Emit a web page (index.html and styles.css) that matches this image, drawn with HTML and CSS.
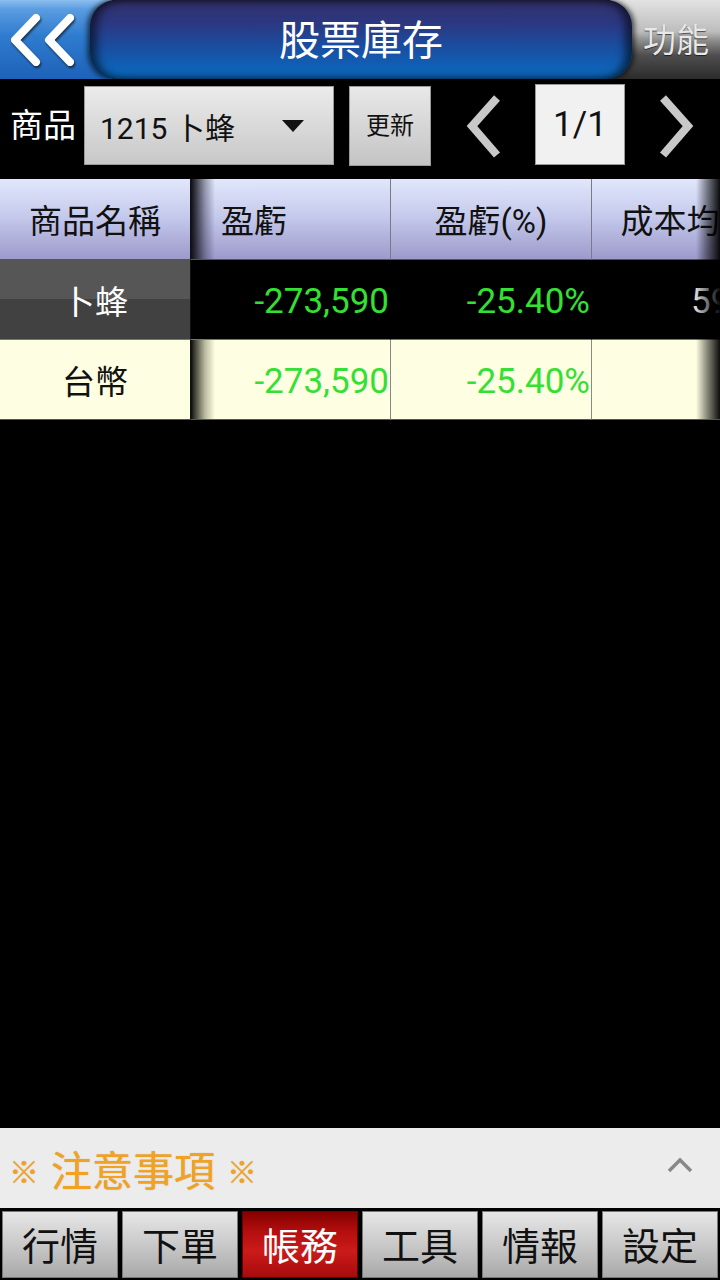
FILE: index.html
```html
<!DOCTYPE html>
<html lang="zh-Hant">
<head>
<meta charset="utf-8">
<title>股票庫存</title>
<link rel="stylesheet" href="styles.css">
</head>
<body>
<div class="app">
  <header class="topbar">
    <div class="back">
      <svg class="back-icon" width="90" height="79" viewBox="0 0 90 79">
        <polyline points="36,18 15,40 36,62" />
        <polyline points="70,18 49,40 70,62" />
      </svg>
    </div>
    <div class="title">股票庫存</div>
    <div class="func">功能</div>
  </header>

  <div class="toolbar">
    <span class="label">商品</span>
    <div class="select"><span class="select-text">1215 卜蜂</span><span class="caret"></span></div>
    <div class="refresh">更新</div>
    <svg class="chev chev-left" width="40" height="86" viewBox="0 0 40 86">
      <polyline points="33,12 8,40 33,69" />
    </svg>
    <div class="page">1/1</div>
    <svg class="chev chev-right" width="40" height="86" viewBox="0 0 40 86">
      <polyline points="7,12 32,40 7,69" />
    </svg>
  </div>

  <div class="table-wrap">
    <div class="grid">
      <div class="cell th c1">商品名稱</div>
      <div class="cell th c2 shade">盈虧</div>
      <div class="cell th c3">盈虧(%)</div>
      <div class="cell th c4">成本均價</div>

      <div class="cell r1 c1 name-dark">卜蜂</div>
      <div class="cell r1 c2 num">-273,590</div>
      <div class="cell r1 c3 num">-25.40%</div>
      <div class="cell r1 c4 num plain">59.52</div>

      <div class="cell r2 c1">台幣</div>
      <div class="cell r2 c2 num shade">-273,590</div>
      <div class="cell r2 c3 num">-25.40%</div>
      <div class="cell r2 c4"></div>
    </div>
    <div class="edge-shadow"></div>
  </div>

  <div class="spacer"></div>

  <div class="notice">
    <span class="notice-text"><span class="mark">※</span>注意事項<span class="mark">※</span></span>
    <svg class="up" width="30" height="20" viewBox="0 0 30 20">
      <polyline points="3,16 14,5 25,16" />
    </svg>
  </div>

  <nav class="tabs">
    <div class="tab">行情</div>
    <div class="tab">下單</div>
    <div class="tab active">帳務</div>
    <div class="tab">工具</div>
    <div class="tab">情報</div>
    <div class="tab">設定</div>
  </nav>
</div>
</body>
</html>
```

FILE: styles.css
```css
* { box-sizing: border-box; }

html, body {
  margin: 0;
  padding: 0;
  background: #000;
}

body {
  font-family: Roboto, "Noto Sans CJK TC", "Noto Sans", sans-serif;
}

.app {
  width: 720px;
  height: 1280px;
  display: flex;
  flex-direction: column;
  background: #000;
  overflow: hidden;
}

/* ---------- top bar ---------- */
.topbar {
  height: 79px;
  display: flex;
  flex: none;
}

.back {
  width: 112px;
  flex: none;
  background: linear-gradient(#8cbff0 0%, #5a9ce0 12%, #2f7ccf 45%, #1d62b8 100%);
}

.back-icon {
  display: block;
  filter: drop-shadow(1px 2px 1px rgba(0, 0, 0, 0.6));
}

.back-icon polyline {
  fill: none;
  stroke: #fff;
  stroke-width: 8;
  stroke-linecap: round;
  stroke-linejoin: round;
}

.title {
  position: relative;
  z-index: 2;
  flex: 1;
  margin: 0 -22px;
  border-radius: 26px;
  background: linear-gradient(#33306a 0%, #2b3882 30%, #194ea0 60%, #0a6cc4 100%);
  box-shadow: inset 7px 0 9px rgba(0, 0, 0, 0.55), inset -7px 0 9px rgba(0, 0, 0, 0.55),
              -3px 0 5px rgba(0, 0, 0, 0.55), 3px 0 5px rgba(0, 0, 0, 0.55);
  color: #fff;
  font-size: 41px;
  line-height: 82px;
  text-align: center;
}

.func {
  width: 110px;
  flex: none;
  padding-left: 22px;
  background: linear-gradient(#e2e2e2 0%, #bdbdbd 40%, #8a8a8a 52%, #4e4e4e 70%, #2c2c2c 100%);
  color: #e8e8e8;
  font-size: 33px;
  line-height: 82px;
  text-align: center;
  text-shadow: 0 1px 1px rgba(0, 0, 0, 0.6);
}

/* ---------- toolbar ---------- */
.toolbar {
  height: 100px;
  flex: none;
  display: flex;
  align-items: flex-start;
  padding-top: 7px;
}

.label {
  width: 84px;
  padding-left: 10px;
  color: #fff;
  font-size: 33px;
  line-height: 79px;
}

.select {
  width: 250px;
  height: 79px;
  display: flex;
  align-items: center;
  justify-content: space-between;
  padding: 0 29px 0 15px;
  background: linear-gradient(#ebebeb, #c8c8c8);
  border: 1px solid #9a9a9a;
  color: #111;
}

.select-text {
  font-size: 30px;
}

.caret {
  width: 0;
  height: 0;
  border-left: 11px solid transparent;
  border-right: 11px solid transparent;
  border-top: 12px solid #111;
}

.refresh {
  width: 82px;
  height: 80px;
  margin-left: 15px;
  background: linear-gradient(#e8e8e8, #c4c4c4);
  border: 1px solid #9a9a9a;
  color: #111;
  font-size: 24px;
  line-height: 78px;
  text-align: center;
}

.chev {
  flex: none;
  display: block;
}

.chev polyline,
.up polyline {
  fill: none;
}

.chev polyline {
  stroke: #c8c8c8;
  stroke-width: 8;
}

.chev-left { margin-left: 33px; }

.page {
  width: 90px;
  height: 81px;
  margin-top: -2px;
  margin-left: 31px;
  background: #f1f1f1;
  border: 1px solid #9a9a9a;
  color: #111;
  font-size: 35px;
  line-height: 79px;
  text-align: center;
}

.chev-right { margin-left: 31px; }

/* ---------- table ---------- */
.table-wrap {
  position: relative;
  flex: none;
  overflow: hidden;
  width: 720px;
}

.grid {
  display: grid;
  grid-template-columns: 191px 200px 201px 190px;
  grid-template-rows: 81px 80px 80px;
  width: 782px;
}

.cell {
  border-right: 1px solid #7a7a80;
  border-bottom: 1px solid #555;
  display: flex;
  align-items: center;
  white-space: nowrap;
  overflow: hidden;
}

.th {
  background: linear-gradient(#e1e7fb 0%, #c6cbed 45%, #9d9acb 100%);
  color: #111;
  font-size: 33px;
  justify-content: center;
}

.th.c1 { border-right-color: #111; }
.th.c2 { justify-content: flex-start; padding-left: 30px; }

.shade.th {
  background: linear-gradient(to right, #101014 0px, rgba(20, 20, 30, 0.85) 4px, rgba(40, 40, 60, 0.4) 14px, rgba(0, 0, 0, 0) 24px),
              linear-gradient(#e1e7fb 0%, #c6cbed 45%, #9d9acb 100%);
}

.r1 {
  background: #000;
  border-right-color: #000;
  border-bottom-color: #777;
}

.r1.c1 {
  border-right-color: #111;
}

.name-dark {
  background: linear-gradient(#565656 0 50%, #414141 50% 100%);
  color: #fff;
  font-size: 33px;
  justify-content: center;
}

.r2 {
  background: #fefee2;
  color: #111;
  border-right-color: #8a8a80;
  border-bottom-color: #555;
}

.r2.c1 {
  font-size: 33px;
  justify-content: center;
  border-right-color: #111;
}

.r2.shade {
  background: linear-gradient(to right, #0c0c0c 0px, rgba(20, 20, 10, 0.8) 4px, rgba(60, 60, 40, 0.35) 14px, rgba(0, 0, 0, 0) 24px),
              #fefee2;
}

.num {
  justify-content: flex-end;
  padding-right: 1px;
  padding-top: 3px;
  color: #34e034;
  font-size: 35px;
  font-family: Roboto, sans-serif;
}

.num.plain {
  color: #d8d8d8;
  padding-right: 2px;
}

.edge-shadow {
  position: absolute;
  top: 0;
  right: 0;
  bottom: 1px;
  width: 24px;
  background: linear-gradient(to right, rgba(0, 0, 0, 0) 0%, rgba(0, 0, 0, 0.45) 45%, rgba(0, 0, 0, 0.95) 100%);
  pointer-events: none;
}

.spacer {
  flex: 1;
}

/* ---------- notice ---------- */
.notice {
  height: 80px;
  flex: none;
  display: flex;
  align-items: center;
  justify-content: space-between;
  padding: 0 24px 0 9px;
  background: #ececec;
}

.notice-text {
  display: flex;
  align-items: center;
  color: #f2a222;
  font-size: 41px;
  text-shadow: 0 0 1px rgba(180, 100, 0, 0.6);
}

.mark {
  font-size: 30px;
  font-weight: 700;
  margin: 4px 12px 0 0;
}

.mark:last-child {
  margin: 4px 0 0 12px;
}

.up {
  display: block;
  margin-top: -6px;
}

.up polyline {
  stroke: #888;
  stroke-width: 3.5;
}

/* ---------- tabs ---------- */
.tabs {
  height: 72px;
  flex: none;
  display: flex;
  gap: 4px;
  padding: 3px 2px 2px;
  background: #000;
}

.tab {
  flex: 1;
  background: linear-gradient(#e6e6e6 0%, #cfcfcf 40%, #a9a9a9 100%);
  border: 1px solid #777;
  color: #111;
  font-size: 38px;
  line-height: 70px;
  text-align: center;
}

.tab.active {
  background: linear-gradient(#850000 0%, #b40e0e 30%, #cc1a1a 60%, #a60c0c 100%);
  border-color: #6a0000;
  color: #fff;
}
```
